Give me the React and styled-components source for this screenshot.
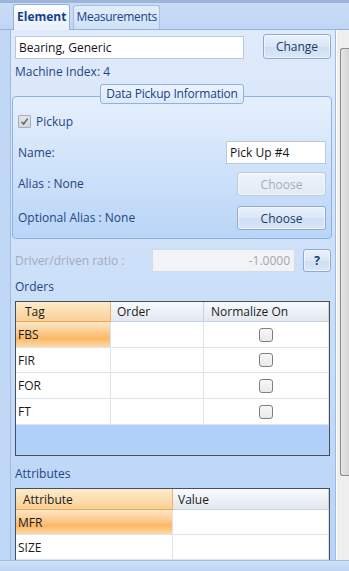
import React from 'react';
import styled, { createGlobalStyle, css } from 'styled-components';

const GlobalStyle = createGlobalStyle`
  html, body { margin: 0; padding: 0; }
  body {
    background: #c0d7f5;
    font-family: "Open Sans", "Noto Sans", sans-serif;
    font-size: 12px;
  }
  * { box-sizing: border-box; }
`;

const Window = styled.div`
  width: 349px;
  height: 571px;
  overflow: hidden;
  display: flex;
  flex-direction: column;
  background: #c0d7f5;
`;

const TopStrip = styled.div`
  flex: none;
  height: 3px;
  background: #9bb4d7;
`;

const TabBar = styled.div`
  flex: none;
  height: 27px;
  display: flex;
  align-items: flex-end;
  gap: 3px;
  padding-left: 13px;
  background: linear-gradient(#cadcf5, #bfd6f4);
  border-bottom: 1px solid #93b3dd;
`;

const Tab = styled.div`
  height: ${p => (p.$active ? 26 : 24)}px;
  margin-bottom: ${p => (p.$active ? -1 : 0)}px;
  padding: 0 ${p => (p.$active ? 3 : 2)}px;
  border: 1px solid ${p => (p.$active ? '#8db2e3' : '#a3c0e6')};
  border-bottom: none;
  border-radius: 3px 3px 0 0;
  background: ${p =>
    p.$active
      ? 'linear-gradient(#ffffff, #e6effb)'
      : 'linear-gradient(#e3edf9, #cfe0f6)'};
  color: #15428b;
  font-weight: ${p => (p.$active ? 700 : 400)};
  letter-spacing: ${p => (p.$active ? 0 : -0.3)}px;
  line-height: ${p => (p.$active ? 23 : 21)}px;
  white-space: nowrap;
`;

const Body = styled.div`
  flex: none;
  height: 530px;
  display: flex;
  padding-left: 10px;
`;

const Panel = styled.div`
  width: 326px;
  height: 100%;
  overflow: hidden;
  display: flex;
  flex-direction: column;
  padding: 4px 4px 0 4px;
  border-left: 1px solid #9dbbe3;
  border-right: 1px solid #9dbbe3;
  background: linear-gradient(#e0ebfa 0%, #cfe1f9 40%, #b8d4f8 100%);
`;

const ScrollTrack = styled.div`
  flex: none;
  width: 13px;
  height: 100%;
  background: #efefef;
  border-left: 1px solid #ffffff;
  padding-top: 18px;
  display: flex;
  justify-content: flex-end;
`;

const ScrollThumb = styled.div`
  width: 9px;
  height: 428px;
  border: 1px solid #8a8a8a;
  border-right: none;
  border-radius: 3px 0 0 3px;
  background: linear-gradient(90deg, #e6e6e6, #d4d4d4);
`;

const BottomStrip = styled.div`
  flex: none;
  height: 11px;
  border-top: 1px solid #9fbce4;
  background: linear-gradient(#cfe1f8, #bcd4f4);
`;

const Row = styled.div`
  display: flex;
  align-items: ${p => p.$align || 'center'};
  justify-content: space-between;
  height: ${p => p.$h}px;
  margin-top: ${p => p.$mt || 0}px;
  flex: none;
`;

const TextBox = styled.div`
  flex: none;
  width: ${p => p.$w}px;
  height: 23px;
  border: 1px solid ${p => (p.$disabled ? '#d2dbe7' : '#b7c9e2')};
  background: ${p => (p.$disabled ? '#f1f3f6' : '#ffffff')};
  color: ${p => (p.$disabled ? '#a0a8b4' : '#141414')};
  padding: 0 4px 0 3px;
  line-height: 21px;
  text-align: ${p => (p.$right ? 'right' : 'left')};
  white-space: nowrap;
  overflow: hidden;
`;

const Button = styled.div`
  flex: none;
  width: ${p => p.$w}px;
  height: ${p => p.$h}px;
  margin-left: ${p => p.$ml || 0}px;
  border: 1px solid ${p => (p.$disabled ? '#b9c9de' : '#8eaad1')};
  border-radius: 3px;
  box-shadow: inset 0 0 0 1px ${p => (p.$disabled ? 'rgba(255,255,255,0.5)' : 'rgba(255,255,255,0.55)')};
  background: ${p =>
    p.$disabled
      ? 'linear-gradient(#eef3f9, #e2eaf4)'
      : 'linear-gradient(#e9f1fb 0%, #dbe7f7 50%, #cddff6 51%, #d9e7f8 100%)'};
  color: ${p => (p.$disabled ? '#a6adb8' : '#1e3a66')};
  font-weight: ${p => (p.$bold ? 700 : 400)};
  display: flex;
  align-items: center;
  justify-content: center;
`;

const Label = styled.div`
  flex: none;
  line-height: 14px;
  height: 14px;
  margin-top: ${p => p.$mt || 0}px;
  color: ${p => (p.$muted ? '#a3abb9' : '#1f4683')};
  width: ${p => (p.$w ? `${p.$w}px` : 'auto')};
  white-space: nowrap;
`;

const GroupWrap = styled.div`
  flex: none;
  display: flex;
  flex-direction: column;
  margin: 5px -1px 0 -3px;
`;

const GroupTitle = styled.div`
  align-self: center;
  position: relative;
  z-index: 1;
  height: 20px;
  margin-bottom: -8px;
  padding: 0 5px;
  border: 1px solid #8db2e3;
  border-radius: 3px;
  background: linear-gradient(#eef4fd, #dde9f9);
  color: #15428b;
  letter-spacing: -0.2px;
  line-height: 18px;
  white-space: nowrap;
`;

const GroupBox = styled.div`
  border: 1px solid #8db2e3;
  border-radius: 4px;
  background: linear-gradient(#e6f0fc, #b9d5f8);
  padding: 17px 5px 8px 5px;
  display: flex;
  flex-direction: column;
`;

const CheckRow = styled.div`
  display: flex;
  align-items: center;
  gap: 5px;
  height: 14px;
  color: #1f4683;
`;

const CheckBox = styled.div`
  flex: none;
  width: ${p => p.$size || 13}px;
  height: ${p => p.$size || 13}px;
  border: 1px solid ${p => (p.$disabled ? '#a9adb4' : '#7f7f7f')};
  border-radius: ${p => (p.$disabled ? 1 : 3)}px;
  background: ${p =>
    p.$disabled
      ? 'linear-gradient(#e2e4e8, #d4d7dc)'
      : 'linear-gradient(#f7f7f7, #e9e9e9)'};
  display: flex;
  align-items: center;
  justify-content: center;
`;

const GridFrame = styled.div`
  flex: none;
  margin-top: 7px;
  margin-right: 1px;
  height: ${p => p.$h}px;
  border: 1px solid #45505c;
  background: #b1d0f8;
  display: flex;
  flex-direction: column;
`;

const GridRow = styled.div`
  flex: none;
  display: grid;
  grid-template-columns: ${p => p.$cols};
  height: ${p => p.$h}px;
`;

const HeadCell = styled.div`
  display: flex;
  align-items: center;
  padding-left: ${p => p.$pl || 6}px;
  color: #1b1b1b;
  white-space: nowrap;
  ${p =>
    p.$selected
      ? css`
          background: linear-gradient(#fdebc9, #f9d096);
          border-right: 1px solid #efb265;
          border-bottom: 1px solid #f0a850;
        `
      : css`
          background: linear-gradient(#f8fafd, #e2e8f1);
          border-right: 1px solid #c8d2df;
          border-bottom: 1px solid #c8d2df;
        `}
`;

const Cell = styled.div`
  display: flex;
  align-items: center;
  justify-content: ${p => (p.$center ? 'center' : 'flex-start')};
  padding-left: ${p => (p.$center ? 0 : 2)}px;
  color: #1b1b1b;
  border-right: 1px solid #dde4ee;
  border-bottom: 1px solid #dde4ee;
  ${p =>
    p.$selected
      ? css`
          background: linear-gradient(#fde7c9 0%, #fcc888 45%, #fbb865 65%, #fdd9a6 100%);
        `
      : css`
          background: #ffffff;
        `}
`;

const CheckMark = () => (
  <svg width="9" height="9" viewBox="0 0 9 9">
    <path d="M1.5 4.8 L3.6 7 L7.6 1.6" fill="none" stroke="#5f6670" strokeWidth="1.5" />
  </svg>
);

const ordersCols = '95px 93px 1fr';
const attrCols = '157px 1fr';

const orders = [
  { tag: 'FBS', h: 26, selected: true },
  { tag: 'FIR', h: 25 },
  { tag: 'FOR', h: 26 },
  { tag: 'FT', h: 26 },
];

const attributes = [
  { name: 'MFR', h: 25, selected: true },
  { name: 'SIZE', h: 25 },
  { name: '', h: 25 },
];

export default function App() {
  return (
    <>
      <GlobalStyle />
      <Window>
        <TopStrip />
        <TabBar>
          <Tab $active>Element</Tab>
          <Tab>Measurements</Tab>
        </TabBar>
        <Body>
          <Panel>
            <Row $h={25} $align="flex-end">
              <TextBox $w={229}>Bearing, Generic</TextBox>
              <Button $w={68} $h={25}>Change</Button>
            </Row>
            <Label $mt={6}>Machine Index: 4</Label>

            <GroupWrap>
              <GroupTitle>Data Pickup Information</GroupTitle>
              <GroupBox>
                <CheckRow>
                  <CheckBox $disabled>
                    <CheckMark />
                  </CheckBox>
                  <span>Pickup</span>
                </CheckRow>
                <Row $h={23} $mt={13}>
                  <Label>Name:</Label>
                  <TextBox $w={100}>Pick Up #4</TextBox>
                </Row>
                <Row $h={24} $mt={8}>
                  <Label>Alias : None</Label>
                  <Button $w={89} $h={24} $disabled>Choose</Button>
                </Row>
                <Row $h={24} $mt={10}>
                  <Label>Optional Alias : None</Label>
                  <Button $w={89} $h={24}>Choose</Button>
                </Row>
              </GroupBox>
            </GroupWrap>

            <Row $h={23} $mt={10}>
              <Label $muted $w={137}>Driver/driven ratio :</Label>
              <TextBox $w={143} $disabled $right>-1.0000</TextBox>
              <Button $w={28} $h={23} $ml={8} $bold>?</Button>
            </Row>

            <Label $mt={8}>Orders</Label>
            <GridFrame $h={155}>
              <GridRow $cols={ordersCols} $h={20}>
                <HeadCell $selected $pl={9}>Tag</HeadCell>
                <HeadCell>Order</HeadCell>
                <HeadCell $pl={7}>Normalize On</HeadCell>
              </GridRow>
              {orders.map(o => (
                <GridRow key={o.tag} $cols={ordersCols} $h={o.h}>
                  <Cell $selected={o.selected}>{o.tag}</Cell>
                  <Cell />
                  <Cell $center>
                    <CheckBox $size={14} />
                  </Cell>
                </GridRow>
              ))}
            </GridFrame>

            <Label $mt={11}>Attributes</Label>
            <GridFrame $h={110}>
              <GridRow $cols={attrCols} $h={21}>
                <HeadCell $selected $pl={7}>Attribute</HeadCell>
                <HeadCell $pl={5}>Value</HeadCell>
              </GridRow>
              {attributes.map((a, i) => (
                <GridRow key={i} $cols={attrCols} $h={a.h}>
                  <Cell $selected={a.selected}>{a.name}</Cell>
                  <Cell />
                </GridRow>
              ))}
            </GridFrame>
          </Panel>
          <ScrollTrack>
            <ScrollThumb />
          </ScrollTrack>
        </Body>
        <BottomStrip />
      </Window>
    </>
  );
}
